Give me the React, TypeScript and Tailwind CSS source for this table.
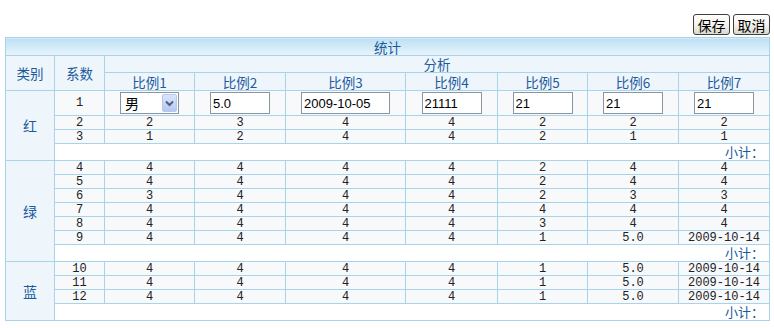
import React from "react";

const cjk = "font-['SimSun','Noto_Sans_CJK_SC',sans-serif]";
const mono = "font-['Liberation_Mono',monospace]";

type Row = (string | number)[];

const groups: { label: string; rows: Row[] }[] = [
  {
    label: "红",
    rows: [
      [1],
      [2, 2, 3, 4, 4, 2, 2, 2],
      [3, 1, 2, 4, 4, 2, 1, 1],
    ],
  },
  {
    label: "绿",
    rows: [
      [4, 4, 4, 4, 4, 2, 4, 4],
      [5, 4, 4, 4, 4, 2, 4, 4],
      [6, 3, 4, 4, 4, 2, 3, 3],
      [7, 4, 4, 4, 4, 4, 4, 4],
      [8, 4, 4, 4, 4, 3, 4, 4],
      [9, 4, 4, 4, 4, 1, "5.0", "2009-10-14"],
    ],
  },
  {
    label: "蓝",
    rows: [
      [10, 4, 4, 4, 4, 1, "5.0", "2009-10-14"],
      [11, 4, 4, 4, 4, 1, "5.0", "2009-10-14"],
      [12, 4, 4, 4, 4, 1, "5.0", "2009-10-14"],
    ],
  },
];

const colWidths = ["w-[49px]", "w-[50px]", "w-[90px]", "w-[91px]", "w-[120px]", "w-[92px]", "w-[90px]", "w-[91px]", "w-[91px]"];

const cell = "border border-[#a9d3ea] p-0 text-center";
const head = `${cell} bg-[#eef6fc] text-[13.5px] text-[#1d5a9c] ${cjk}`;
const data = `${cell} bg-[#f8f9fb] h-[14px] leading-[12px] text-[12px] text-[#222] ${mono}`;

function TextBox({ value, wide }: { value: string; wide?: boolean }) {
  return (
    <input
      defaultValue={value}
      readOnly
      className={`${wide ? "w-[89px]" : "w-[60px]"} h-[22px] border border-[#8c959c] bg-white px-[2px] text-[13px] text-black font-['Liberation_Sans',Arial,sans-serif] outline-none`}
    />
  );
}

function FakeSelect() {
  return (
    <div className="mx-auto flex h-[22px] w-[59px] items-center justify-between border border-[#8c959c] bg-white pl-[4px] pr-[1px]">
      <span className={`text-[14px] text-black ${cjk}`}>男</span>
      <span className="flex h-[18px] w-[15px] items-center justify-center rounded-[2px] border border-[#b7c8ef] bg-gradient-to-b from-[#dbe5fb] to-[#b5c8f3]">
        <svg width="9" height="7" viewBox="0 0 9 7">
          <path d="M1 1.5 L4.5 5 L8 1.5" fill="none" stroke="#4d6185" strokeWidth="2" />
        </svg>
      </span>
    </div>
  );
}

function Btn({ label }: { label: string }) {
  return (
    <button
      className={`h-[21px] w-[37px] rounded-[3px] border border-[#3f3f3f] bg-gradient-to-b from-white via-[#f4f3ee] to-[#dcd9cc] text-[14px] leading-[18px] text-black ${cjk}`}
    >
      {label}
    </button>
  );
}

export default function App() {
  return (
    <div className="h-[328px] w-[774px] bg-white">
      <div className="flex justify-end gap-[3px] pr-[4px] pt-[14px]">
        <Btn label="保存" />
        <Btn label="取消" />
      </div>
      <table className="ml-[5px] mt-[2px] w-[764px] table-fixed border-collapse">
        <colgroup>
          {colWidths.map((w, i) => (
            <col key={i} className={w} />
          ))}
        </colgroup>
        <thead>
          <tr>
            <td colSpan={9} className={`${cell} h-[18px] bg-gradient-to-b from-[#bde0f4] to-[#e8f4fb] text-[13.5px] leading-[14px] text-[#1d5a9c] ${cjk}`}>
              统计
            </td>
          </tr>
          <tr>
            <td rowSpan={2} className={head}>类别</td>
            <td rowSpan={2} className={head}>系数</td>
            <td colSpan={7} className={`${head} h-[17px] leading-[14px]`}>分析</td>
          </tr>
          <tr>
            {[1, 2, 3, 4, 5, 6, 7].map((n) => (
              <td key={n} className={`${head} h-[18px] leading-[14px]`}>
                比例{n}
              </td>
            ))}
          </tr>
        </thead>
        <tbody>
          {groups.map((g) => (
            <React.Fragment key={g.label}>
              {g.rows.map((r, i) => (
                <tr key={i}>
                  {i === 0 && (
                    <td rowSpan={g.rows.length + 1} className={`${head} text-[14px]`}>
                      {g.label}
                    </td>
                  )}
                  {r.length === 1 ? (
                    <>
                      <td className={`${data} h-[25px]`}>{r[0]}</td>
                      <td className={`${data} h-[25px]`}><FakeSelect /></td>
                      <td className={`${data} h-[25px]`}><TextBox value="5.0" /></td>
                      <td className={`${data} h-[25px]`}><TextBox value="2009-10-05" wide /></td>
                      <td className={`${data} h-[25px]`}><TextBox value="21111" /></td>
                      <td className={`${data} h-[25px]`}><TextBox value="21" /></td>
                      <td className={`${data} h-[25px]`}><TextBox value="21" /></td>
                      <td className={`${data} h-[25px]`}><TextBox value="21" /></td>
                    </>
                  ) : (
                    r.map((v, j) => (
                      <td key={j} className={data}>
                        {v}
                      </td>
                    ))
                  )}
                </tr>
              ))}
              <tr>
                <td colSpan={8} className={`${cell} h-[17px] bg-white pr-[5px] text-right text-[13px] leading-[14px] text-[#1d5a9c] ${cjk}`}>
                  小计：
                </td>
              </tr>
            </React.Fragment>
          ))}
        </tbody>
      </table>
    </div>
  );
}
